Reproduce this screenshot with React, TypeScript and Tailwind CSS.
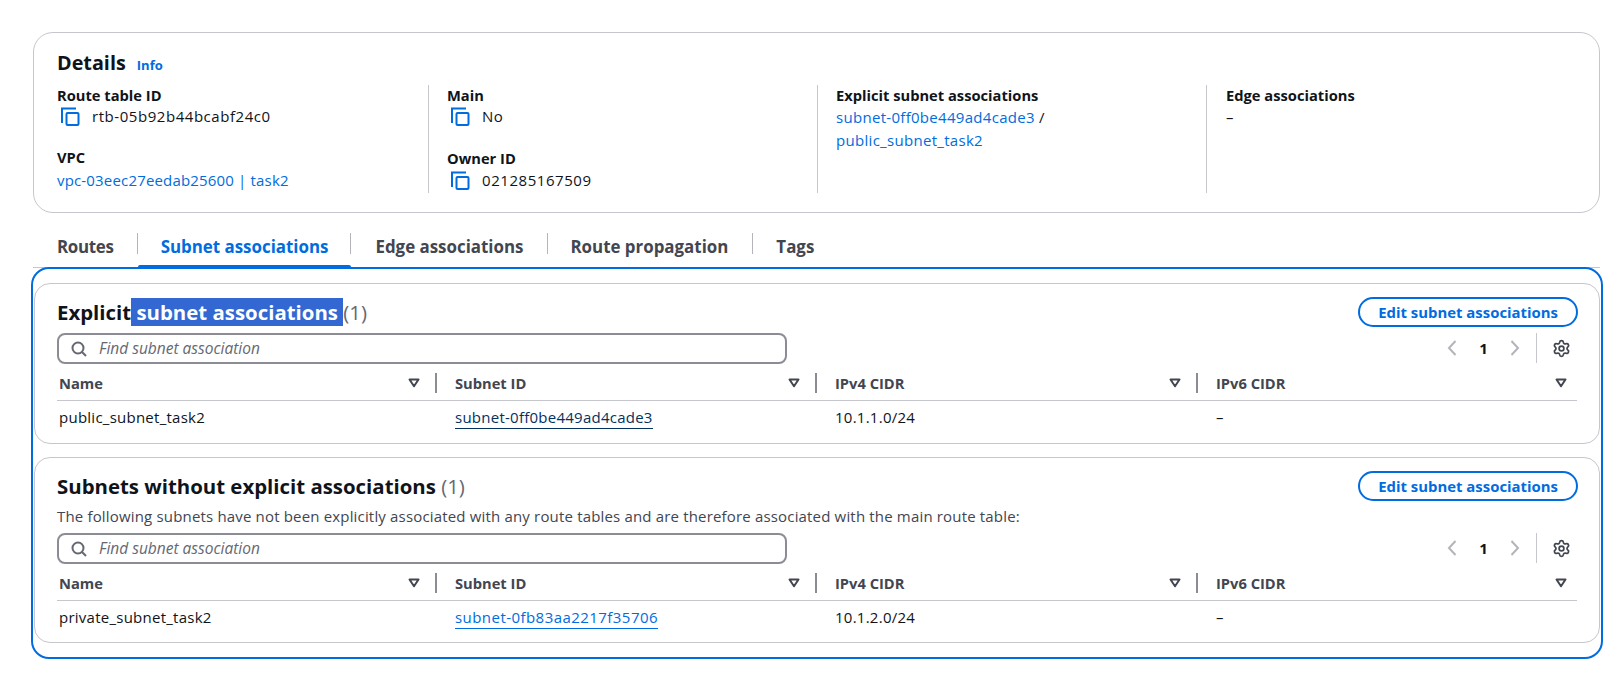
import { Settings } from "lucide-react";

const font = "font-['Open_Sans',sans-serif]";

function CopyIcon() {
  return (
    <svg viewBox="0 0 20 20" className="mr-[12px] ml-[3px] h-[20px] w-[20px] shrink-0" fill="none" stroke="#006ce0" strokeWidth="2">
      <path d="M2 17V2.5h14" strokeLinecap="butt" />
      <rect x="6.5" y="7" width="12" height="12" rx="1" />
    </svg>
  );
}

function FilterArrow() {
  return (
    <svg viewBox="0 0 12 10" className="h-[10px] w-[12px] shrink-0" fill="none" stroke="#424650" strokeWidth="2" strokeLinejoin="round">
      <path d="M1.5 1.5h9L6 8.2z" />
    </svg>
  );
}

function SearchIcon() {
  return (
    <svg viewBox="0 0 16 16" className="h-[16px] w-[16px] shrink-0" fill="none" stroke="#656871" strokeWidth="2">
      <circle cx="7" cy="7" r="5.5" />
      <path d="M11 11l4 4" />
    </svg>
  );
}

function Chevron({ left }: { left?: boolean }) {
  return (
    <svg viewBox="0 0 10 16" className="h-[16px] w-[10px]" fill="none" stroke="#b4b4bb" strokeWidth="2">
      <path d={left ? "M8.5 1L2 8l6.5 7" : "M1.5 1L8 8l-6.5 7"} />
    </svg>
  );
}

const link = "text-[#006ce0]";
const body = "text-[15px] tracking-[0.25px]";
const mono = "text-[15px] tracking-[0.55px]";

function Label({ children }: { children: React.ReactNode }) {
  return <div className="text-[14.7px] leading-[20px] font-bold text-[#0f141a]">{children}</div>;
}

function Copyable({ value }: { value: string }) {
  return (
    <div className={`flex h-[22px] items-center text-[#0f141a] ${mono}`}>
      <CopyIcon />
      {value}
    </div>
  );
}

function Details() {
  return (
    <section className="h-[181px] rounded-[20px] border border-[#c6c6cd] px-[23px] pt-[14px]">
      <div className="flex items-baseline gap-[11px]">
        <h2 className="text-[19.8px] leading-[32px] font-bold text-[#0f141a]">Details</h2>
        <a className={`text-[13px] font-bold ${link}`}>Info</a>
      </div>
      <div className="mt-[6px] grid grid-cols-[372px_371px_371px_1fr] gap-x-[18px]">
        <div className="relative h-[108px]">
          <Label>Route table ID</Label>
          <Copyable value="rtb-05b92b44bcabf24c0" />
          <div className="mt-[20px]">
            <Label>VPC</Label>
            <div className="mt-[2px] text-[15px] leading-[22px] tracking-[0.17px]">
              <a className={link}>vpc-03eec27eedab25600 | task2</a>
            </div>
          </div>
          <div className="absolute top-0 right-0 h-full w-px bg-[#c6c6cd]" />
        </div>
        <div className="relative h-[108px]">
          <Label>Main</Label>
          <Copyable value="No" />
          <div className="mt-[21px]">
            <Label>Owner ID</Label>
            <div className="mt-[1px]">
              <Copyable value="021285167509" />
            </div>
          </div>
          <div className="absolute top-0 right-0 h-full w-px bg-[#c6c6cd]" />
        </div>
        <div className="relative h-[108px]">
          <Label>Explicit subnet associations</Label>
          <div className="mt-[1px] text-[15px] leading-[23px] tracking-[0.3px]">
            <a className={link}>subnet-0ff0be449ad4cade3</a>
            <span className="text-[#0f141a]"> /</span>
            <br />
            <a className={link}>public_subnet_task2</a>
          </div>
          <div className="absolute top-0 right-0 h-full w-px bg-[#c6c6cd]" />
        </div>
        <div className="pl-[1px]">
          <Label>Edge associations</Label>
          <div className={`mt-[1px] leading-[22px] text-[#0f141a] ${body}`}>–</div>
        </div>
      </div>
    </section>
  );
}

const tabs = [
  { label: "Routes", pad: "pr-[24px] pl-[24px] tracking-[-0.3px]" },
  { label: "Subnet associations", pad: "pr-[23px] pl-[23px]" },
  { label: "Edge associations", pad: "pr-[25px] pl-[24px]" },
  { label: "Route propagation", pad: "pr-[25px] pl-[22px]" },
  { label: "Tags", pad: "pl-[23px]" },
];

function Tabs() {
  return (
    <div className="flex h-[55px] items-end border-b border-[#c6c6cd]">
      {tabs.map((tab, i) => (
        <div
          key={tab.label}
          className={`relative flex h-[36px] items-center pb-[5px] ${tab.pad} text-[16.9px] font-bold ${i === 1 ? "text-[#006ce0]" : "text-[#424650]"}`}
        >
          {tab.label}
          {i < tabs.length - 1 && <span className="absolute top-[2px] right-0 h-[21px] w-px bg-[#b4b4bb]" />}
          {i === 1 && <span className="absolute right-0 -bottom-[2px] left-0 h-[4px] rounded-t-[2px] bg-[#006ce0]" />}
        </div>
      ))}
    </div>
  );
}

function TableSection({
  title,
  selected,
  description,
  name,
  subnet,
  subnetClass,
  cidr,
  height,
}: {
  title: string;
  selected?: string;
  description?: string;
  name: string;
  subnet: string;
  subnetClass: string;
  cidr: string;
  height: string;
}) {
  const heads = ["Name", "Subnet ID", "IPv4 CIDR", "IPv6 CIDR"];
  return (
    <section className={`rounded-[16px] border border-[#c6c6cd] pt-[13px] pr-[22px] pl-[22px] ${height}`}>
      <div className="flex items-start justify-between">
        <div>
          <h2 className="mt-[-1px] text-[20.4px] leading-[32px] font-bold text-[#0f141a]">
            {title}
            {selected && <span className="bg-[#3367d1] text-white">{selected}</span>}
            <span className="font-normal text-[#656871]"> (1)</span>
          </h2>
          {description && <p className="mt-[4px] text-[15px] leading-[20px] tracking-[0.17px] text-[#424650]">{description}</p>}
        </div>
        <button className="mr-[-1px] h-[30px] rounded-full border-2 border-[#006ce0] px-[18px] text-[14.9px] font-bold text-[#006ce0]">
          Edit subnet associations
        </button>
      </div>
      <div className={`flex h-[32px] items-center justify-between ${description ? "mt-[6px]" : "mt-[4px]"}`}>
        <div className="flex h-[31px] w-[730px] items-center gap-[12px] rounded-[8px] border-2 border-[#8c8c94] pt-[2px] pl-[12px] text-[15.5px] text-[#656871] italic">
          <SearchIcon />
          Find subnet association
        </div>
        <div className="flex items-center">
          <Chevron left />
          <span className="mx-[22px] w-[9px] text-center text-[15px] font-bold text-[#0f141a]">1</span>
          <Chevron />
          <span className="mr-[15px] ml-[16px] h-[30px] w-px bg-[#c6c6cd]" />
          <Settings className="mr-[6px] h-[19px] w-[19px] text-[#424650]" strokeWidth={2.2} />
        </div>
      </div>
      <div className={`grid grid-cols-[380px_380px_381px_1fr] items-center border-b border-[#c6c6cd] ${description ? "mt-[2px] h-[35px]" : "mt-[3px] h-[34px]"}`}>
        {heads.map((head, i) => (
          <div key={head} className={`flex items-center justify-between text-[14.7px] font-bold text-[#424650] ${i === 0 ? "pl-[2px]" : "pl-[18px]"}`}>
            {head}
            <div className="flex items-center">
              <FilterArrow />
              {i < 3 ? <span className="ml-[15px] h-[20px] w-[2px] bg-[#8c8c94]" /> : <span className="w-[10px]" />}
            </div>
          </div>
        ))}
      </div>
      <div className={`grid h-[32px] grid-cols-[380px_380px_381px_1fr] items-center text-[#0f141a] ${body}`}>
        <div className="pl-[2px]">{name}</div>
        <div className="pl-[18px]">
          <a className={`border-b pb-[1px] ${subnetClass}`}>{subnet}</a>
        </div>
        <div className="pl-[18px]">{cidr}</div>
        <div className="pl-[18px]">–</div>
      </div>
    </section>
  );
}

export default function App() {
  return (
    <div className={`${font} min-h-[695px] bg-white pt-[32px] pr-[18px] pl-[33px]`}>
      <Details />
      <Tabs />
      <div className="mt-[-1px] mr-[-3px] ml-[-2px] h-[392px] rounded-[18px] border-2 border-[#006ce0] p-[14px_1px_0_1px]">
        <TableSection
          title="Explicit"
          selected=" subnet associations "
          name="public_subnet_task2"
          subnet="subnet-0ff0be449ad4cade3"
          subnetClass="border-[#033160] text-[#033160]"
          cidr="10.1.1.0/24"
          height="h-[161px]"
        />
        <div className="h-[13px]" />
        <TableSection
          title="Subnets without explicit associations"
          description="The following subnets have not been explicitly associated with any route tables and are therefore associated with the main route table:"
          name="private_subnet_task2"
          subnet="subnet-0fb83aa2217f35706"
          subnetClass="border-[#006ce0] text-[#006ce0] tracking-[0.45px]"
          cidr="10.1.2.0/24"
          height="h-[186px]"
        />
      </div>
    </div>
  );
}
